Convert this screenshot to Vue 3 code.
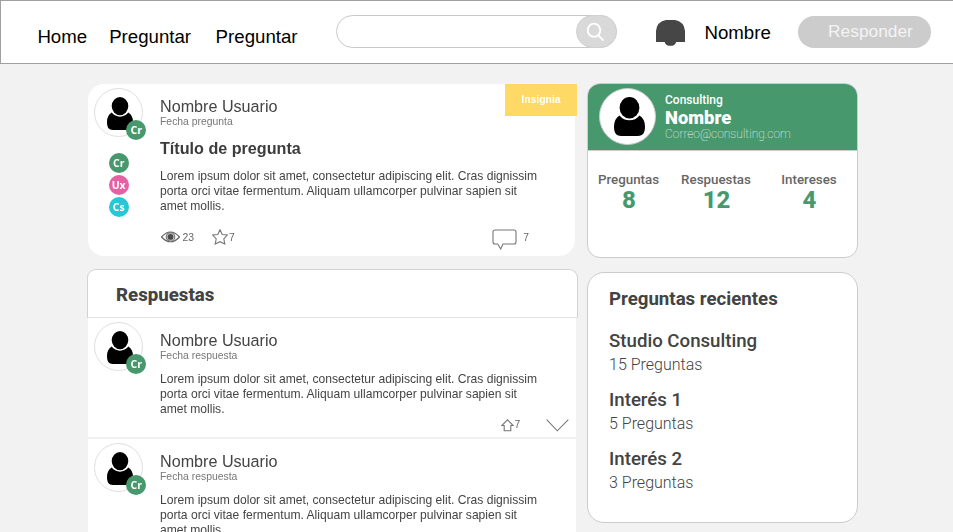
<script setup>
import { h } from 'vue'

const lines = [
  'Lorem ipsum dolor sit amet, consectetur adipiscing elit. Cras dignissim',
  'porta orci vitae fermentum. Aliquam ullamcorper pulvinar sapien sit',
  'amet mollis.',
]
const tags = [
  { label: 'Cr', kind: 'green' },
  { label: 'Ux', kind: 'pink' },
  { label: 'Cs', kind: 'cyan' },
]
const answers = [1, 2]
const stats = [
  { label: 'Preguntas', value: 8 },
  { label: 'Respuestas', value: 12 },
  { label: 'Intereses', value: 4 },
]
const recent = [
  { name: 'Studio Consulting', count: '15 Preguntas' },
  { name: 'Interés 1', count: '5 Preguntas' },
  { name: 'Interés 2', count: '3 Preguntas' },
]

const PersonIcon = () =>
  h('svg', { viewBox: '0 0 26 33', preserveAspectRatio: 'none' }, [
    h('ellipse', { cx: 13, cy: 9.1, rx: 8.3, ry: 9.1 }),
    h('path', {
      d: 'M4.6 15.6Q0 18.500 0 25C0 30 1.500 33 6 33H20C24.500 33 26 30 26 25Q26 18.500 21.400 15.600Q18 19.700 13 19.700Q8 19.700 4.600 15.600Z',
    }),
  ])
</script>

<template>
  <div class="page">
    <header class="topbar">
      <nav class="nav">
        <a>Home</a>
        <a>Preguntar</a>
        <a>Preguntar</a>
      </nav>
      <div class="search">
        <button class="search-btn">
          <svg viewBox="0 0 20 20" width="20" height="20">
            <ellipse cx="8" cy="8.2" rx="6.3" ry="6.6" />
            <path d="M12 13L17.6 18.6" />
          </svg>
        </button>
      </div>
      <svg class="bell" viewBox="0 0 29 27" width="29" height="27">
        <path d="M0 22V11Q1 1.5 10 0H19Q28 1.5 29 11V22H20.2A6 5.2 0 0 1 8.600 22Z" />
      </svg>
      <span class="user">Nombre</span>
      <button class="reply">Responder</button>
    </header>

    <main class="content">
      <section class="feed">
        <article class="post question">
          <div class="side">
            <div class="avatar">
              <PersonIcon class="person" />
              <span class="tag green corner">Cr</span>
            </div>
            <div class="tags">
              <span v-for="t in tags" :key="t.label" class="tag" :class="t.kind">{{ t.label }}</span>
            </div>
          </div>
          <div class="body">
            <div class="name">Nombre Usuario</div>
            <div class="date">Fecha pregunta</div>
            <h2 class="title">Título de pregunta</h2>
            <p class="text"><span v-for="l in lines" :key="l">{{ l }}</span></p>
            <div class="meta">
              <svg class="eye" viewBox="0 0 19 12" width="19" height="12">
                <path class="lid" d="M.5 6Q9.500-4 18.500 6Q9.500 15.500 .5 6Z" />
                <circle class="iris" cx="9.500" cy="5.900" r="4.300" />
                <circle class="pupil" cx="9.500" cy="5.900" r="2.900" />
              </svg>
              <span class="views">23</span>
              <svg class="star" viewBox="0 0 16 16" width="16" height="16">
                <path d="M8 .8L10.200 5.600L15.300 6L11.800 9.800L12.800 15L8 12.700L3.200 15L4.200 9.800L.7 6L5.800 5.600Z" />
              </svg>
              <span>7</span>
              <svg class="comment" viewBox="0 0 25 21" width="25" height="21">
                <path d="M3 1H22Q24 1 24 3V13Q24 15 22 15H11L8.700 20L5.700 15H3Q1 15 1 13V3Q1 1 3 1Z" />
              </svg>
              <span>7</span>
            </div>
          </div>
          <span class="ribbon">Insignia</span>
        </article>

        <h2 class="answers-head">Respuestas</h2>

        <article v-for="a in answers" :key="a" class="post answer">
          <div class="side">
            <div class="avatar">
              <PersonIcon class="person" />
              <span class="tag green corner">Cr</span>
            </div>
          </div>
          <div class="body">
            <div class="name">Nombre Usuario</div>
            <div class="date">Fecha respuesta</div>
            <p class="text"><span v-for="l in lines" :key="l">{{ l }}</span></p>
            <div class="votes">
              <svg class="up" viewBox="0 0 13 13" width="13" height="13">
                <path d="M6.500 .8L12.200 6.500H9.800V11.800H3.200V6.500H.8Z" />
              </svg>
              <span>7</span>
              <svg class="chev" viewBox="0 0 23 13" width="23" height="13">
                <path d="M.7 .7L11.300 11.800L22.300 .7" />
              </svg>
            </div>
          </div>
        </article>
      </section>

      <aside class="aside">
        <section class="profile">
          <div class="profile-head">
            <div class="avatar large"><PersonIcon class="person" /></div>
            <div class="who">
              <div class="company">Consulting</div>
              <div class="who-name">Nombre</div>
              <div class="mail">Correo@consulting.com</div>
            </div>
          </div>
          <div class="stats">
            <div v-for="s in stats" :key="s.label" class="stat">
              <span class="label">{{ s.label }}</span>
              <strong>{{ s.value }}</strong>
            </div>
          </div>
        </section>

        <section class="recent">
          <h2>Preguntas recientes</h2>
          <div v-for="r in recent" :key="r.name" class="entry">
            <div class="entry-name">{{ r.name }}</div>
            <div class="entry-count">{{ r.count }}</div>
          </div>
        </section>
      </aside>
    </main>
  </div>
</template>

<style>
body {
  background: #f2f2f2;
  overflow: hidden;
}
</style>

<style scoped>
* {
  box-sizing: border-box;
}
.page {
  height: 532px;
  overflow: hidden;
  background: #f2f2f2;
  font-family: "Liberation Sans", Arial, sans-serif;
}
h2,
p {
  margin: 0;
}
button {
  border: 0;
  padding: 0;
  font-family: inherit;
}
svg {
  display: block;
  flex: none;
}
.topbar {
  display: flex;
  align-items: flex-start;
  height: 64px;
  padding-left: 36.400px;
  background: #fff;
  border: 1px solid #a0a0a0;
  border-right: 0;
}
.nav {
  display: flex;
  width: 298.600px;
  padding-top: 26px;
  font-size: 18.67px;
  line-height: 20px;
}
.nav a {
  margin-right: 22px;
}
.nav a:nth-child(2) {
  margin-right: 24.500px;
}
.search {
  display: flex;
  justify-content: flex-end;
  width: 281px;
  height: 33px;
  margin-top: 14px;
  border: 1px solid #c9c9c9;
  border-radius: 17px;
}
.search-btn {
  display: flex;
  justify-content: center;
  align-items: center;
  width: 41px;
  height: 33px;
  margin: -1px;
  padding-right: 1px;
  border: 1px solid #d0d0d0;
  border-radius: 17px;
  background: #d9d9d9;
}
.search-btn svg {
  fill: none;
  stroke: #fff;
  stroke-width: 1.9;
}
.bell {
  margin: 19px 0 0 39px;
  fill: #464646;
}
.user {
  width: 93.500px;
  margin: 22px 0 0 19.500px;
  font-size: 18.67px;
  line-height: 20px;
}
.reply {
  width: 133px;
  height: 32px;
  margin-top: 15px;
  padding: 0 0 2px 12px;
  border-radius: 16px;
  background: #ccc;
  color: #f4f4f4;
  font-size: 17.33px;
  line-height: 30px;
}
.content {
  display: flex;
  gap: 9px;
  padding: 19px 0 0 87px;
}
.feed {
  width: 491px;
  padding-top: 1px;
}
.post {
  display: flex;
  background: #fff;
  margin-left: 1px;
  color: #444;
}
.post .side,
.post .body,
.ribbon {
  filter: blur(.4px);
}
.question {
  position: relative;
  width: 487.200px;
  height: 171.500px;
  border-radius: 16px;
}
.side {
  width: 72px;
  padding: 4.300px 0 0 6.200px;
}
.avatar {
  position: relative;
  display: flex;
  width: 49px;
  height: 49px;
  padding: 7.300px 0 0 11.500px;
  background: #fff;
  border: 1px solid #dedede;
  border-radius: 50%;
}
.person {
  width: 26px;
  height: 33px;
  fill: #000;
}
.tag {
  display: block;
  width: 20px;
  height: 20px;
  border-radius: 50%;
  color: #fff;
  font: 700 10.500px/20px "Open Sans", sans-serif;
  text-align: center;
}
.corner {
  position: absolute;
  left: 31px;
  top: 31px;
}
.green {
  background: #47986d;
}
.pink {
  background: #e760a4;
}
.cyan {
  background: #25c8d5;
}
.tags {
  display: flex;
  flex-direction: column;
  gap: 2.100px;
  padding: 15.300px 0 0 14.500px;
}
.body {
  flex: 1;
  padding-top: 12.600px;
}
.name {
  font-size: 16.150px;
  line-height: 18px;
}
.date {
  margin-top: 1.400px;
  color: #777;
  font-size: 10.400px;
  line-height: 12px;
}
.title {
  margin-top: 9.600px;
  color: #3c3c3c;
  font-size: 16.150px;
  line-height: 20px;
}
.text {
  margin-top: 11.900px;
  font-size: 12.100px;
  line-height: 14.700px;
}
.answer .text {
  margin-top: 10.500px;
}
.text span {
  display: block;
  white-space: nowrap;
}
.meta {
  display: flex;
  margin-top: 14.200px;
  color: #666;
  font-size: 10.400px;
  line-height: 20px;
}
.meta svg {
  fill: none;
  stroke: #777;
  stroke-width: 1.100;
}
.meta .eye {
  margin: 3.500px 3px 0 .5px;
}
.eye .lid {
  stroke: #666;
  stroke-width: 1.200;
}
.eye .iris {
  fill: #ccc;
  stroke: #777;
}
.eye .pupil {
  fill: #4a4a4a;
  stroke: none;
}
.views {
  width: 29.500px;
}
.meta .star {
  margin: 1.500px 1px 0 0;
}
.meta .comment {
  margin: 1.700px 6.500px 0 257px;
}
.ribbon {
  position: absolute;
  right: -1.800px;
  top: 0;
  width: 72px;
  height: 32.300px;
  background: #ffd966;
  color: #fff;
  font-size: 10.400px;
  font-weight: 700;
  line-height: 31px;
  text-align: center;
}
.answers-head {
  height: 49px;
  margin-top: 13.500px;
  padding-left: 28px;
  background: #fff;
  border: 1px solid #d2d2d2;
  border-bottom-color: #e2e2e2;
  border-radius: 9px 9px 0 0;
  color: #434343;
  font: 800 18.67px/50px Roboto, sans-serif;
}
.answer {
  width: 488px;
  height: 121px;
  border-bottom: 2px solid #f0f0f0;
}
.votes {
  display: flex;
  margin-top: .3px;
  padding-left: 341px;
  color: #666;
  font-size: 10.400px;
  line-height: 16px;
}
.votes svg {
  fill: none;
  stroke: #777;
  stroke-width: 1.100;
}
.votes .up {
  margin: 1.700px .5px 0 0;
}
.votes .chev {
  margin: 2.500px 0 0 25.500px;
}
.aside {
  width: 271px;
  font-family: Roboto, sans-serif;
}
.profile {
  height: 175px;
  overflow: hidden;
  background: #fff;
  border: 1px solid #ccc;
  border-radius: 13px;
}
.profile-head {
  display: flex;
  height: 67px;
  padding: 4px 0 0 11px;
  background: #47986d;
  border-bottom: 1px solid #ccc;
  color: #fff;
}
.large {
  width: 57px;
  height: 57px;
  padding: 8px 0 0 14px;
  border-color: #ccc;
}
.large .person {
  width: 31px;
  height: 39px;
}
.who {
  padding: 4px 0 0 9px;
}
.company {
  font-size: 12px;
  font-weight: 500;
  line-height: 16px;
}
.who-name {
  font-size: 18.400px;
  font-weight: 900;
  line-height: 20px;
}
.mail {
  font-size: 12px;
  font-weight: 100;
  line-height: 12px;
}
.stats {
  display: flex;
  padding: 20px 0 0 10px;
}
.stat {
  display: flex;
  flex-direction: column;
  align-items: center;
  width: 61px;
}
.stat:nth-child(2) {
  width: 70px;
  margin: 0 30px 0 22px;
}
.stat:nth-child(3) {
  width: 56px;
}
.label {
  color: #666;
  font-size: 13.330px;
  font-weight: 500;
  line-height: 18px;
}
.stat strong {
  padding-left: 1px;
  color: #47986d;
  font-size: 24px;
  font-weight: 800;
  line-height: 22px;
}
.recent {
  height: 251px;
  margin-top: 14px;
  padding: 15px 0 0 21px;
  background: #fff;
  border: 1px solid #ccc;
  border-radius: 17px;
  color: #434343;
}
.recent h2 {
  margin-bottom: 20px;
  font-size: 18.67px;
  font-weight: 700;
  line-height: 22px;
}
.entry {
  height: 58.800px;
}
.entry-name {
  font-size: 18.67px;
  font-weight: 500;
  line-height: 22px;
}
.entry-count {
  padding-top: 2px;
  font-size: 16px;
  font-weight: 300;
  line-height: 22px;
}
</style>
